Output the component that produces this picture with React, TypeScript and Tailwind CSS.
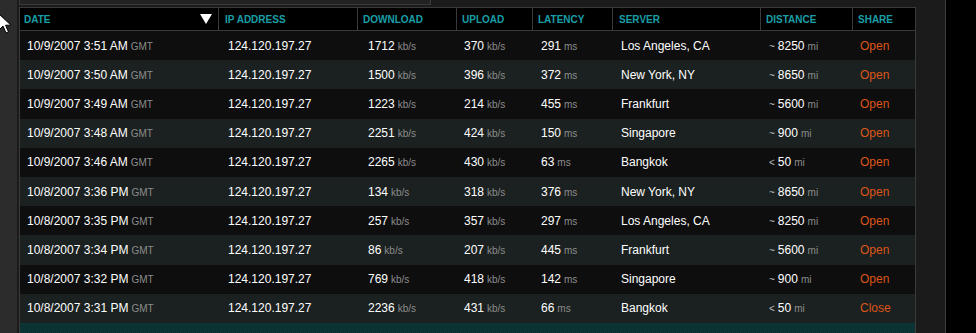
import React from "react";

type Row = {
  date: string;
  ampm: string;
  ip: string;
  down: string;
  up: string;
  lat: string;
  server: string;
  distPre: string;
  dist: string;
  share: string;
};

const rows: Row[] = [
  { date: "10/9/2007 3:51", ampm: "AM", ip: "124.120.197.27", down: "1712", up: "370", lat: "291", server: "Los Angeles, CA", distPre: "~", dist: "8250", share: "Open" },
  { date: "10/9/2007 3:50", ampm: "AM", ip: "124.120.197.27", down: "1500", up: "396", lat: "372", server: "New York, NY", distPre: "~", dist: "8650", share: "Open" },
  { date: "10/9/2007 3:49", ampm: "AM", ip: "124.120.197.27", down: "1223", up: "214", lat: "455", server: "Frankfurt", distPre: "~", dist: "5600", share: "Open" },
  { date: "10/9/2007 3:48", ampm: "AM", ip: "124.120.197.27", down: "2251", up: "424", lat: "150", server: "Singapore", distPre: "~", dist: "900", share: "Open" },
  { date: "10/9/2007 3:46", ampm: "AM", ip: "124.120.197.27", down: "2265", up: "430", lat: "63", server: "Bangkok", distPre: "<", dist: "50", share: "Open" },
  { date: "10/8/2007 3:36", ampm: "PM", ip: "124.120.197.27", down: "134", up: "318", lat: "376", server: "New York, NY", distPre: "~", dist: "8650", share: "Open" },
  { date: "10/8/2007 3:35", ampm: "PM", ip: "124.120.197.27", down: "257", up: "357", lat: "297", server: "Los Angeles, CA", distPre: "~", dist: "8250", share: "Open" },
  { date: "10/8/2007 3:34", ampm: "PM", ip: "124.120.197.27", down: "86", up: "207", lat: "445", server: "Frankfurt", distPre: "~", dist: "5600", share: "Open" },
  { date: "10/8/2007 3:32", ampm: "PM", ip: "124.120.197.27", down: "769", up: "418", lat: "142", server: "Singapore", distPre: "~", dist: "900", share: "Open" },
  { date: "10/8/2007 3:31", ampm: "PM", ip: "124.120.197.27", down: "2236", up: "431", lat: "66", server: "Bangkok", distPre: "<", dist: "50", share: "Close" },
];

const Unit = ({ children }: { children: React.ReactNode }) => (
  <span className="ml-[3px] text-[10px] text-[#8c8c8c]">{children}</span>
);

export default function App() {
  return (
    <div
      className="relative flex h-[333px] w-[976px] overflow-hidden bg-black"
      style={{ fontFamily: '"Liberation Sans", Arial, sans-serif' }}
    >
      {/* left strip */}
      <div className="h-full w-[17px] shrink-0 bg-[#2c2c2c]" />
      {/* main panel */}
      <div className="flex h-full w-[929px] shrink-0 flex-col overflow-hidden border-r border-[#3e3e3e] bg-[#1b1b1b] pl-[2px]">
        {/* top input remnant */}
        <div className="h-[5px] w-[412px] shrink-0 border-x border-b border-[#3a3a3a] bg-[#222222]" />
        <div className="h-[2px] shrink-0" />
        {/* table */}
        <div className="w-[897px] shrink-0 border-x border-[#3a3a3a] bg-[#0e0e0e]">
          {/* header */}
          <div className="flex h-[24px] border-y border-[#3a3a3a] bg-black text-[10px] font-bold uppercase text-[#1a9ea6]">
            <div className="relative flex w-[199px] items-center border-r border-[#3a3a3a] pl-[4px]">
              DATE
              <svg className="absolute right-[6px] top-[6px]" width="12" height="10" viewBox="0 0 12 10">
                <polygon points="0,0 12,0 6,10" fill="#ffffff" />
              </svg>
            </div>
            <div className="flex w-[139px] items-center border-r border-[#3a3a3a] pl-[6px]">IP ADDRESS</div>
            <div className="flex w-[99px] items-center border-r border-[#3a3a3a] pl-[5px]">DOWNLOAD</div>
            <div className="flex w-[76px] items-center border-r border-[#3a3a3a] pl-[5px]">UPLOAD</div>
            <div className="flex w-[80px] items-center border-r border-[#3a3a3a] pl-[5px]">LATENCY</div>
            <div className="flex w-[148px] items-center border-r border-[#3a3a3a] pl-[6px]">SERVER</div>
            <div className="flex w-[92px] items-center border-r border-[#3a3a3a] pl-[5px]">DISTANCE</div>
            <div className="flex flex-1 items-center pl-[5px]">SHARE</div>
          </div>
          {/* rows */}
          {rows.map((r, i) => (
            <div
              key={i}
              className={`flex h-[29.2px] items-center text-[12px] text-white ${
                i % 2 === 0 ? "bg-[#0e0e0e]" : "bg-[#1b2120]"
              }`}
            >
              <div className="w-[199px] pl-[7px]">
                {r.date} {r.ampm}
                <Unit>GMT</Unit>
              </div>
              <div className="w-[140px] pl-[9px]">{r.ip}</div>
              <div className="w-[99px] pl-[9px]">
                {r.down}
                <Unit>kb/s</Unit>
              </div>
              <div className="w-[77px] pl-[6px]">
                {r.up}
                <Unit>kb/s</Unit>
              </div>
              <div className="w-[80px] pl-[6px]">
                {r.lat}
                <Unit>ms</Unit>
              </div>
              <div className="w-[148px] pl-[6px]">{r.server}</div>
              <div className="w-[92px] pl-[6px]">
                <span className="mr-[3px] text-[10px] text-[#bdbdbd]">{r.distPre}</span>
                {r.dist}
                <Unit>mi</Unit>
              </div>
              <div className="flex-1 pl-[5px] text-[#dd5519]">{r.share}</div>
            </div>
          ))}
          {/* teal strip */}
          <div className="h-[2px] bg-[#0d3536]" />
          <div className="h-[20px] bg-[repeating-conic-gradient(#0c3b3c_0_25%,#092b2c_0_50%)] bg-[length:2px_2px]" />
        </div>
      </div>
      {/* cursor */}
      <svg className="absolute left-[-2px] top-[13px]" width="16" height="22" viewBox="0 0 16 22">
        <path d="M1 1 L1 17 L5 13 L8 20 L10.5 19 L7.6 12.2 L13 12.2 Z" fill="#ffffff" stroke="#000000" strokeWidth="1" />
      </svg>
    </div>
  );
}
